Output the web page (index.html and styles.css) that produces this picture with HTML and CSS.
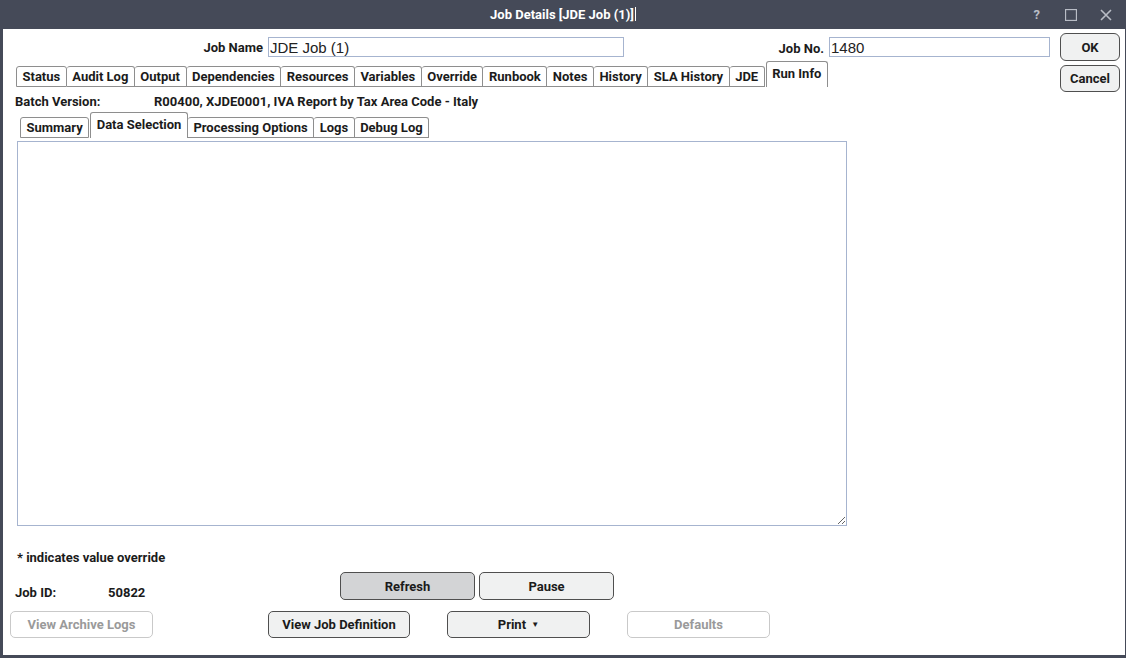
FILE: index.html
```html
<!DOCTYPE html>
<html lang="en">

<head>
    <meta charset="UTF-8">
    <title>Job Details [JDE Job (1)]</title>
    <link rel="stylesheet" href="styles.css">
</head>

<body>

    <div class="titlebar">
        <span></span>
        <div class="title">Job Details [JDE Job (1)]<span class="caret"></span></div>
        <div class="window-controls">
            <span class="help">?</span>
            <svg width="12" height="12" viewBox="0 0 12 12"><rect x="0.5" y="0.5" width="11" height="11" fill="none" stroke="#b9bdc6" stroke-width="1.3"/></svg>
            <svg width="12" height="12" viewBox="0 0 12 12"><path d="M1 1L11 11M11 1L1 11" stroke="#b9bdc6" stroke-width="1.6"/></svg>
        </div>
    </div>

    <div class="content">
        <div class="top">
            <div class="top-main">
                <div class="header-row">
                    <label class="name-label">Job Name</label>
                    <input type="text" class="name-input" value="JDE Job (1)">
                    <label class="no-label">Job No.</label>
                    <input type="text" class="no-input" value="1480">
                </div>
                <div class="tabs main-tabs">
                    <div class="tab">Status</div>
                    <div class="tab">Audit Log</div>
                    <div class="tab">Output</div>
                    <div class="tab">Dependencies</div>
                    <div class="tab">Resources</div>
                    <div class="tab">Variables</div>
                    <div class="tab">Override</div>
                    <div class="tab">Runbook</div>
                    <div class="tab">Notes</div>
                    <div class="tab">History</div>
                    <div class="tab">SLA History</div>
                    <div class="tab">JDE</div>
                    <div class="tab active">Run Info</div>
                </div>
            </div>
            <div class="dialog-buttons">
                <button class="btn">OK</button>
                <button class="btn">Cancel</button>
            </div>
        </div>

        <div class="batch">
            <span class="batch-label">Batch Version:</span>
            <span>R00400, XJDE0001, IVA Report by Tax Area Code - Italy</span>
        </div>

        <div class="tabs sub-tabs">
            <div class="tab">Summary</div>
            <div class="tab active">Data Selection</div>
            <div class="tab">Processing Options</div>
            <div class="tab">Logs</div>
            <div class="tab">Debug Log</div>
        </div>

        <textarea class="selection-box"></textarea>

        <div class="note">* indicates value override</div>

        <div class="row-one">
            <div class="job-id">
                <span class="job-id-label">Job ID:</span>
                <span>50822</span>
            </div>
            <button class="btn wide pressed">Refresh</button>
            <button class="btn wide">Pause</button>
        </div>

        <div class="row-two">
            <button class="btn wide disabled">View Archive Logs</button>
            <button class="btn wide">View Job Definition</button>
            <button class="btn wide">Print <span class="arrow">&#9660;</span></button>
            <button class="btn wide disabled">Defaults</button>
        </div>
    </div>

</body>

</html>
```

FILE: styles.css
```css
* {
    box-sizing: border-box;
}

body {
    margin: 0;
    height: 658px;
    background-color: #454a58;
    font-family: 'Roboto', 'Liberation Sans', sans-serif;
    font-size: 13px;
    font-weight: bold;
    color: #1b1b1b;
    display: flex;
    flex-direction: column;
    overflow: hidden;
}

.titlebar {
    height: 29px;
    display: grid;
    grid-template-columns: 1fr auto 1fr;
    align-items: center;
    color: #ffffff;
}

.title {
    font-size: 13px;
}

.caret {
    display: inline-block;
    width: 1px;
    height: 14px;
    background: #ffffff;
    vertical-align: -2px;
    margin-left: 1px;
}

.window-controls {
    justify-self: end;
    display: flex;
    align-items: center;
    gap: 23px;
    padding-right: 14px;
}

.help {
    color: #b9bdc6;
    font-size: 13px;
    margin-right: 2px;
}

.content {
    flex: 1;
    background: #ffffff;
    margin: 0 1px 3px 3px;
    display: flex;
    flex-direction: column;
}

.top {
    display: flex;
}

.top-main {
    flex: 1;
}

.header-row {
    margin-top: 4px;
    height: 28px;
    display: flex;
    align-items: center;
}

.name-label {
    width: 260px;
    text-align: right;
    margin-right: 5px;
}

.header-row input {
    height: 20px;
    border: 1px solid #a6b4cf;
    font-family: 'Liberation Sans', Arial, sans-serif;
    font-size: 15px;
    font-weight: normal;
    color: #222;
    padding: 0 1px;
    margin: 0;
    outline: none;
}

.name-input {
    width: 356px;
}

.no-label {
    flex: 1;
    text-align: right;
    margin-right: 5px;
    padding-top: 3px;
}

.no-input {
    width: 221px;
}

.dialog-buttons {
    width: 60px;
    margin: 4px 5px 0 10px;
    display: flex;
    flex-direction: column;
    gap: 4px;
}

.dialog-buttons .btn {
    height: 28px;
    width: 60px;
    border-radius: 6px;
}

.dialog-buttons .btn:last-child {
    height: 27px;
}

.tabs {
    display: flex;
    align-items: flex-end;
}

.main-tabs {
    margin-left: 13px;
    height: 25px;
    margin-top: 1px;
}

.tab {
    height: 21px;
    padding: 0 5.5px;
    border: 1px solid #8e8e8e;
    border-left-width: 0;
    border-radius: 3px 3px 0 0;
    background: #ffffff;
    display: flex;
    align-items: center;
}

.tab:first-child {
    border-left-width: 1px;
}

.tab.active {
    height: 26px;
    border-bottom: none;
    border-left-width: 1px;
    margin-left: 1px;
    align-items: flex-start;
    padding-top: 4px;
}

.batch {
    display: flex;
    margin: 1px 0 0 12px;
    height: 16px;
    align-items: center;
}

.batch-label {
    width: 139px;
}

.sub-tabs {
    margin: 3px 0 0 17px;
    height: 26px;
}

.selection-box {
    margin: 3px 0 0 14px;
    width: 830px;
    height: 385px;
    border: 1px solid #a6b4cf;
    resize: both;
    outline: none;
}

.note {
    margin: 24px 0 0 14px;
    height: 14px;
    display: flex;
    align-items: center;
}

.row-one {
    margin-top: 8px;
    display: flex;
    align-items: center;
    height: 28px;
}

.job-id {
    width: 337px;
    display: flex;
    padding: 12px 0 0 12px;
}

.job-id-label {
    width: 93px;
}

.btn {
    font-family: 'Roboto', 'Liberation Sans', sans-serif;
    font-size: 13px;
    font-weight: bold;
    color: #1b1b1b;
    background: #f0f1f1;
    border: 1px solid #4f4f4f;
    border-radius: 5px;
    padding: 0;
}

.wide {
    width: 135px;
    height: 28px;
}

.row-one .wide + .wide {
    margin-left: 4px;
}

.pressed {
    background: #d3d4d6;
}

.row-two {
    margin-top: 11px;
    display: flex;
    padding-left: 7px;
    gap: 37px;
}

.row-two .wide {
    width: 143px;
    height: 27px;
}

.row-two .wide:nth-child(2) {
    margin-left: 78px;
    width: 142px;
}

.disabled {
    background: #ffffff;
    border-color: #c9c9c9;
    color: #9a9a9a;
}

.arrow {
    font-size: 8px;
    margin-left: 2px;
    vertical-align: 2px;
}
```
